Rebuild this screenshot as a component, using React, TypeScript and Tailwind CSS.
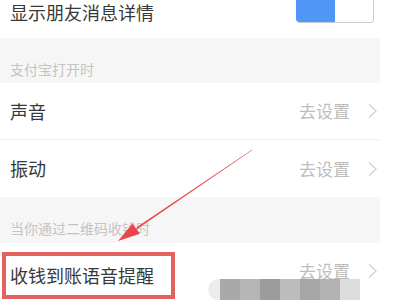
const font = { fontFamily: '"Noto Sans CJK SC", "Noto Sans", sans-serif' };

const Chevron = () => (
  <svg width="9" height="16" viewBox="0 0 9 16" className="shrink-0">
    <polyline points="1,1.5 8,8 1,14.5" fill="none" stroke="#d2d2d2" strokeWidth="1.3" />
  </svg>
);

const GoSet = ({ lift }: { lift?: boolean }) => (
  <div className={`flex items-center gap-[18px] ${lift ? "-mt-[8px]" : ""}`}>
    <span className="text-[17px] text-[#bdbdbd]">去设置</span>
    <Chevron />
  </div>
);

const SettingRow = ({ label, last }: { label: string; last?: boolean }) => (
  <div className={`flex items-center justify-between h-[57px] pl-[10px] pr-[3px] ${last ? "" : "border-b border-[#f0f0f0]"}`}>
    <span className="text-[18px] text-[#383838]">{label}</span>
    <GoSet />
  </div>
);

const mosaic = ["#a9a9a9", "#b6b6b6", "#9c9c9c", "#bcbcbc", "#a6a6a6", "#b2b2b2", "#dcdcdc"];

export default function App() {
  return (
    <div className="relative w-[396px] h-[307px] overflow-hidden bg-white" style={font}>
      <div className="w-[380px]">
        {/* top switch row */}
        <div className="flex items-center justify-between h-[24px] pl-[10px] pr-[6px]">
          <span className="text-[18px] text-[#383838] leading-[24px]">显示朋友消息详情</span>
          <div className="flex w-[78px] h-[23px] -mt-[2px] rounded-b-[4px] overflow-hidden border-r border-b border-[#c8ccd2]">
            <div className="w-[39px] bg-[#5096f7]" />
            <div className="flex-1 bg-white" />
          </div>
        </div>
        <div className="h-[14px]" />

        <div className="h-[45px] bg-[#f6f6f6] flex items-end pl-[10px] pb-[4px]">
          <span className="text-[14px] leading-[20px] text-[#c4c4c4]">支付宝打开时</span>
        </div>
        <SettingRow label="声音" />
        <SettingRow label="振动" last />

        <div className="h-[46px] bg-[#f6f6f6] flex items-end pl-[10px] pb-[5px]">
          <span className="text-[14px] leading-[20px] text-[#c4c4c4]">当你通过二维码收钱时</span>
        </div>

        <div className="flex items-center justify-between h-[64px] pl-[2px] pr-[3px]">
          <span className="border-[4px] border-[#e2625d] pl-[4px] pr-[17px] h-[47px] flex items-center text-[18px] text-[#383838]">
            收钱到账语音提醒
          </span>
          <GoSet lift />
        </div>
      </div>

      {/* blurred mosaic */}
      <div className="absolute left-[208px] top-[279px] h-[21px] flex rounded-l-full bg-[#ececec] pl-[12px]">
        {mosaic.map((c, i) => (
          <div key={i} className="w-[20px] h-full" style={{ backgroundColor: c }} />
        ))}
      </div>

      {/* red arrow annotation */}
      <svg className="absolute left-0 top-0 pointer-events-none" width="396" height="307">
        <polygon points="252.3,149.6 251.7,150.4 135.0,230.4 137.4,226.8" fill="#e8454c" />
        <polygon points="118,241 139.8,233.8 132.6,223.4" fill="#e8454c" />
      </svg>
    </div>
  );
}
